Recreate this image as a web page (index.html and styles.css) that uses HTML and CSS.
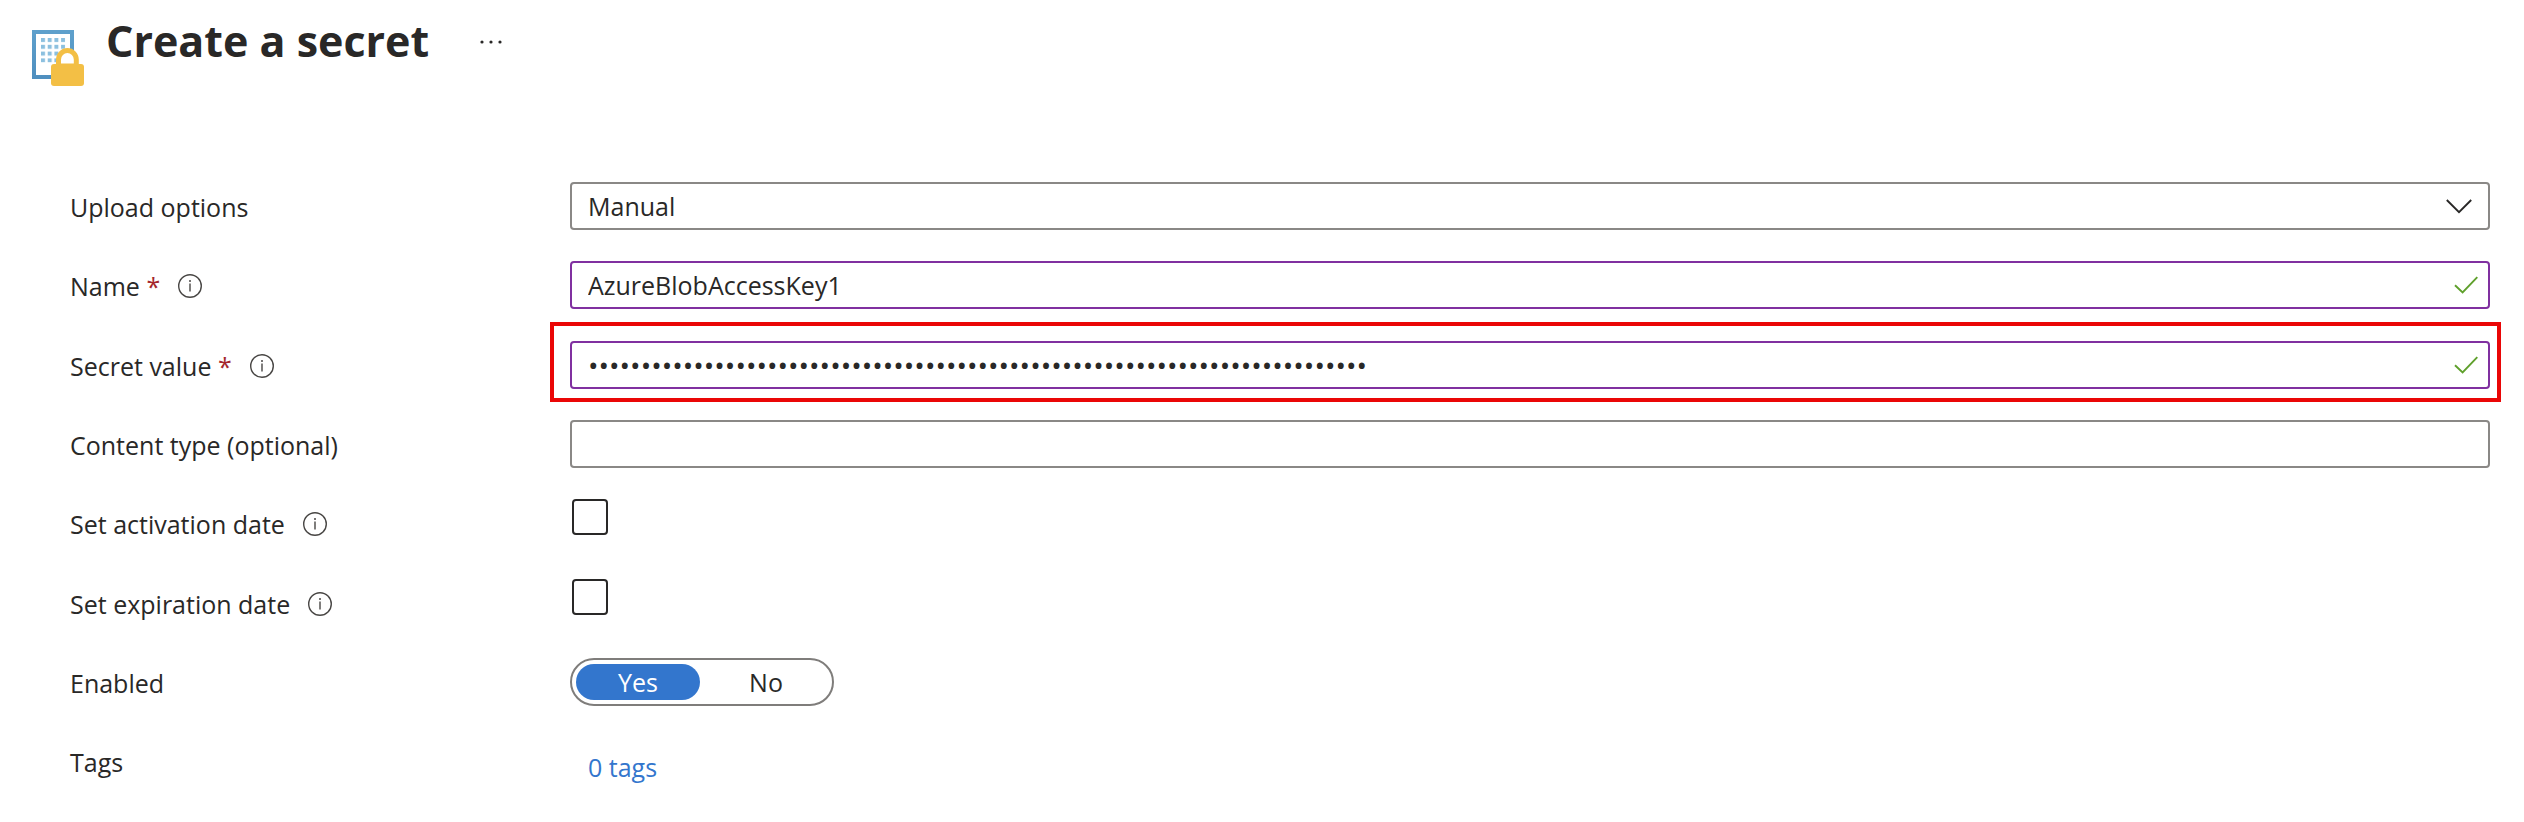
FILE: index.html
```html
<!DOCTYPE html>
<html lang="en">
<head>
<meta charset="utf-8">
<title>Create a secret</title>
<link rel="stylesheet" href="styles.css">
</head>
<body>
<svg class="defs" aria-hidden="true">
  <symbol id="info" viewBox="0 0 24 24">
    <circle cx="12" cy="12" r="11.3" fill="none" stroke="currentColor" stroke-width="1.4"/>
    <path d="M12 9.5V17.5" stroke="currentColor" stroke-width="1.4"/>
    <circle cx="12" cy="7" r="1" fill="currentColor"/>
  </symbol>
  <symbol id="check" viewBox="0 0 24 18">
    <path d="M1 9.2L8.600 16.400L23.300 1.200" fill="none" stroke="currentColor" stroke-width="1.9"/>
  </symbol>
</svg>
<header class="header">
  <svg class="logo" viewBox="0 0 52 56" aria-hidden="true">
    <defs>
      <linearGradient id="frame" x1="0" y1="0" x2="0" y2="1">
        <stop offset="0" stop-color="#5ea0cc"/><stop offset="1" stop-color="#4f8fbf"/>
      </linearGradient>
      <pattern id="dots" width="6.700" height="6.800" patternUnits="userSpaceOnUse" x="9" y="8">
        <rect width="4" height="4" fill="#8cc0df"/>
      </pattern>
    </defs>
    <rect x="2" y="2" width="38" height="45" fill="#fff" stroke="url(#frame)" stroke-width="4"/>
    <rect x="9" y="8" width="24.200" height="24.500" fill="url(#dots)"/>
    <path d="M26.500 36V29.500a8.900 9 0 0 1 17.800 0V36z" fill="#fff" stroke="#f3bf45" stroke-width="5"/>
    <rect x="19" y="34" width="33" height="22" rx="3" fill="#f3bf45"/>
  </svg>
  <h1 class="title">Create a secret</h1>
  <button class="more" type="button" aria-label="More actions">
    <svg class="more-icon" viewBox="0 0 24 6" aria-hidden="true"><circle cx="3" cy="3" r="1.600"/><circle cx="12" cy="3" r="1.600"/><circle cx="21" cy="3" r="1.600"/></svg>
  </button>
</header>
<form class="form">
  <div class="row">
    <label class="label" for="upload">Upload options</label>
    <div class="field">
      <select class="control" id="upload"><option>Manual</option></select>
      <svg class="chevron" viewBox="0 0 26 15" aria-hidden="true"><path d="M.8 1L13 13.200L25.200 1" fill="none" stroke="currentColor" stroke-width="1.900"/></svg>
    </div>
  </div>
  <div class="row tall">
    <div class="label"><label for="name">Name <span class="required">*</span></label><svg class="info"><use href="#info"/></svg></div>
    <div class="field">
      <input class="control valid" id="name" type="text" value="AzureBlobAccessKey1">
      <svg class="check"><use href="#check"/></svg>
    </div>
  </div>
  <div class="row highlighted">
    <div class="label"><label for="secret">Secret value <span class="required">*</span></label><svg class="info"><use href="#info"/></svg></div>
    <div class="field">
      <input class="control valid secret" id="secret" type="password" value="01234567890123456789012345678901234567890123456789012345678901234567890123">
      <svg class="check"><use href="#check"/></svg>
    </div>
  </div>
  <div class="row">
    <label class="label" for="type">Content type (optional)</label>
    <div class="field"><input class="control" id="type" type="text"></div>
  </div>
  <div class="row tall">
    <div class="label"><label for="activation">Set activation date</label><svg class="info"><use href="#info"/></svg></div>
    <div class="field"><input class="checkbox" id="activation" type="checkbox"></div>
  </div>
  <div class="row">
    <div class="label"><label for="expiration">Set expiration date</label><svg class="info"><use href="#info"/></svg></div>
    <div class="field"><input class="checkbox" id="expiration" type="checkbox"></div>
  </div>
  <div class="row">
    <div class="label" id="enabled">Enabled</div>
    <div class="field">
      <div class="toggle" role="radiogroup" aria-labelledby="enabled">
        <label class="choice"><input class="radio" type="radio" name="enabled" checked>Yes</label>
        <label class="choice"><input class="radio" type="radio" name="enabled">No</label>
      </div>
    </div>
  </div>
  <div class="row">
    <div class="label">Tags</div>
    <div class="field"><a class="tags" href="#tags">0 tags</a></div>
  </div>
</form>
</body>
</html>
```

FILE: styles.css
```css
* { box-sizing: border-box; }

body {
  margin: 0;
  background: #fff;
  color: #292827;
  font-family: "Segoe UI", "Open Sans", "Noto Sans", sans-serif;
  font-size: 25px;
  line-height: 36px;
}

.defs { position: absolute; width: 0; height: 0; }

.header {
  display: flex;
  align-items: flex-start;
  padding: 10px 32px 0;
}

.logo { width: 52px; height: 56px; margin-top: 20px; }

.title {
  margin: 0 0 0 22px;
  font-size: 43px;
  font-weight: 700;
  line-height: 62px;
}

.more {
  margin-left: 50px;
  padding: 0;
  height: 64px;
  border: 0;
  background: none;
  color: inherit;
}

.more-icon { display: block; width: 24px; height: 6px; fill: currentColor; }

.form {
  display: flex;
  flex-direction: column;
  gap: 31px;
  padding: 96px 34px 32px 70px;
}

.row {
  position: relative;
  display: grid;
  grid-template-columns: 500px 1fr;
  min-height: 48px;
}

.tall { min-height: 49px; }

.highlighted::after {
  content: "";
  position: absolute;
  inset: -19px -11px -13px 480px;
  border: 4px solid #ea0606;
  pointer-events: none;
}

.label {
  display: flex;
  align-items: center;
  height: 48px;
  padding-top: 1px;
  gap: 18px;
}

.required { color: #a4262c; }

.info { width: 24px; height: 24px; color: #484644; }

.field { position: relative; }

.control {
  display: block;
  width: 100%;
  height: 48px;
  padding: 0 56px 0 16px;
  border: 2px solid #8a8886;
  border-radius: 4px;
  background: #fff;
  color: inherit;
  font: inherit;
  appearance: none;
}

.valid { border-color: #8030a0; }

.secret { font-size: 28px; }

.chevron {
  position: absolute;
  top: 17px;
  right: 18px;
  width: 26px;
  height: 15px;
  pointer-events: none;
}

.check {
  position: absolute;
  top: 15px;
  right: 12px;
  width: 24px;
  height: 18px;
  color: #5fa02c;
}

.checkbox {
  display: block;
  width: 36px;
  height: 36px;
  margin: 0 2px;
  border: 2px solid #292827;
  border-radius: 4px;
  appearance: none;
}

.toggle {
  display: inline-flex;
  gap: 4px;
  width: 264px;
  height: 48px;
  padding: 4px;
  border: 2px solid #7f7d7b;
  border-radius: 24px;
}

.choice {
  width: 124px;
  height: 36px;
  border-radius: 18px;
  text-align: center;
}

.choice:has(:checked) { background: #3376cd; color: #fff; }

.radio {
  position: absolute;
  width: 1px;
  height: 1px;
  margin: 0;
  opacity: 0;
}

.tags {
  display: inline-block;
  padding: 12px 18px 0;
  color: #3376cd;
  text-decoration: none;
}
```
